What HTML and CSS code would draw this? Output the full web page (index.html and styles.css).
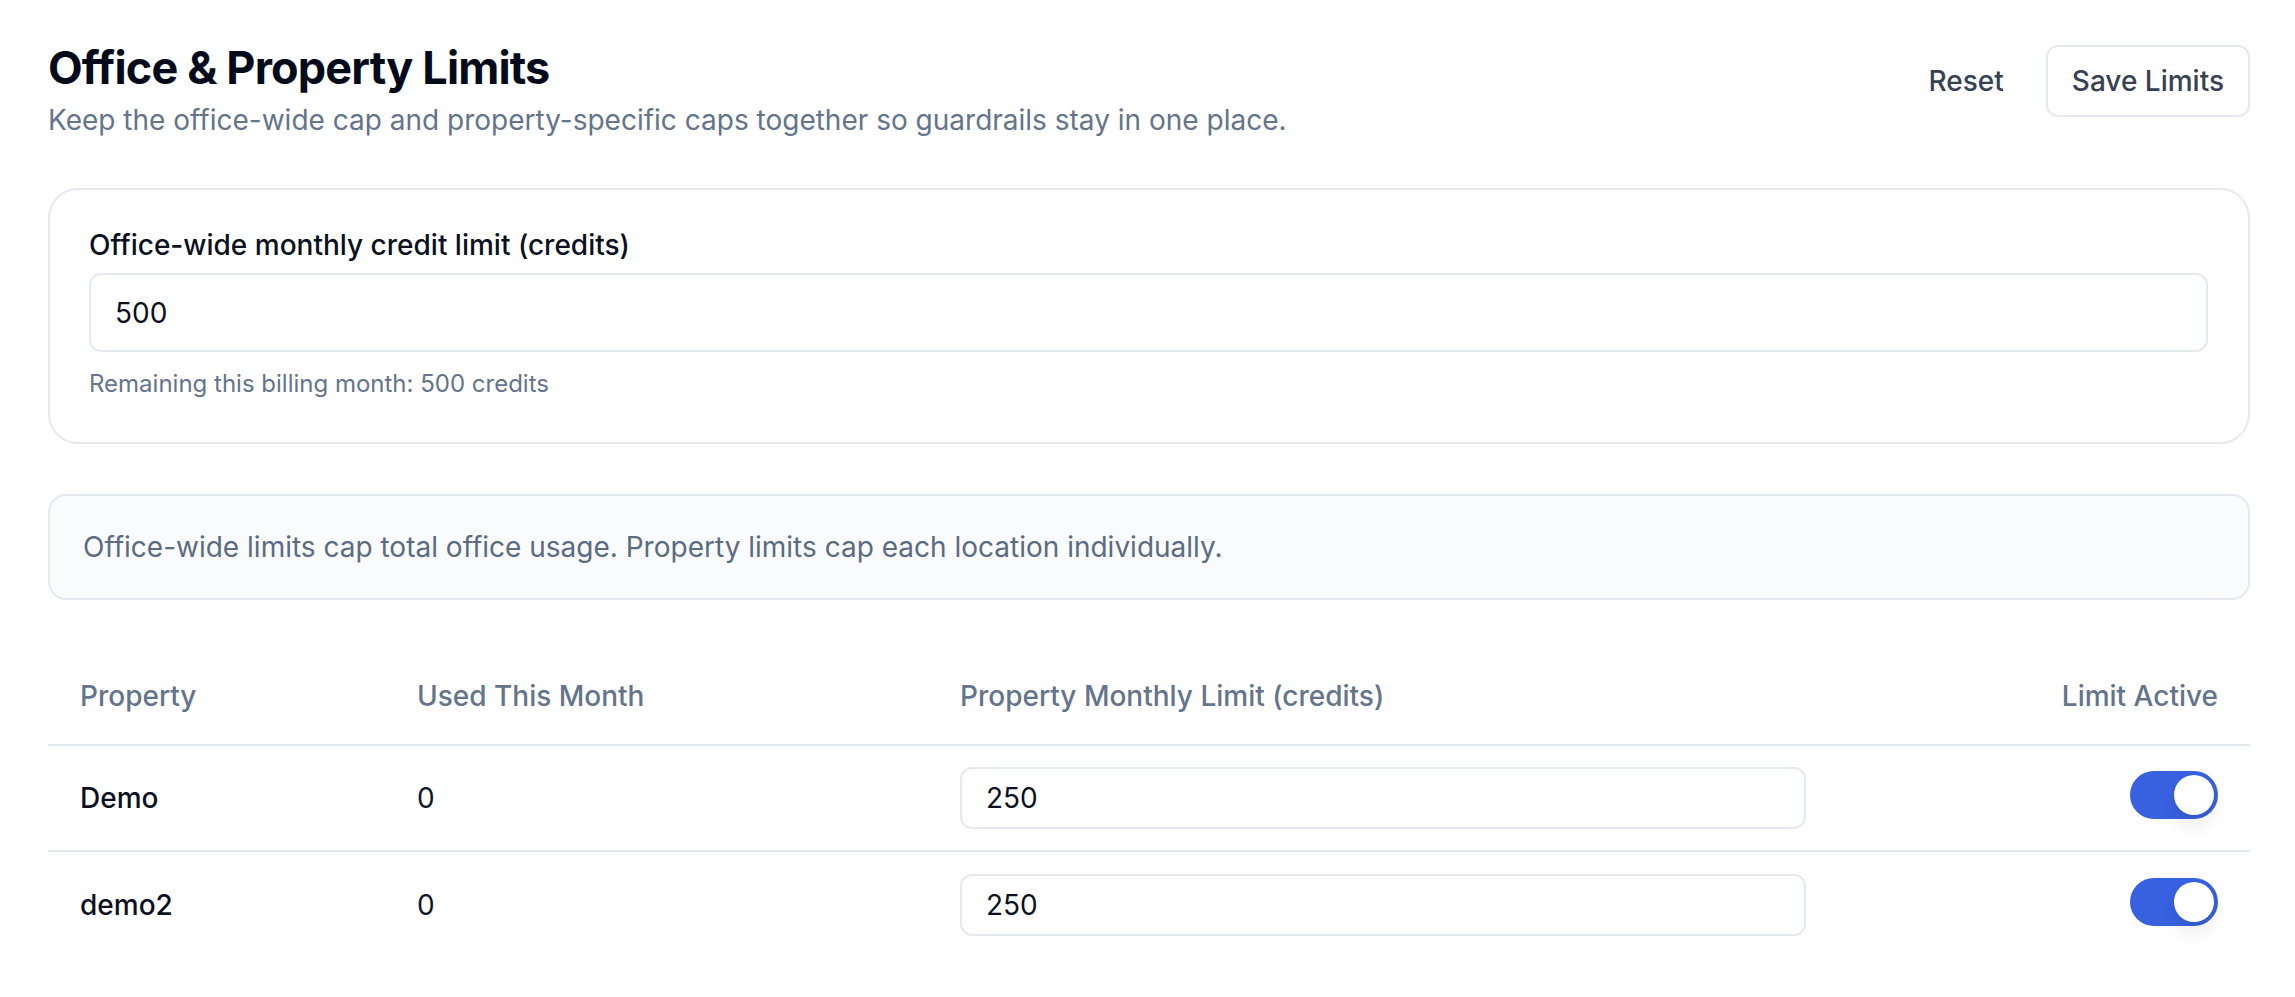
FILE: index.html
```html
<!DOCTYPE html>
<html lang="en">
<head>
<meta charset="utf-8">
<title>Office &amp; Property Limits</title>
<link rel="stylesheet" href="styles.css">
</head>
<body>
<main class="page">
  <header class="page-header">
    <div class="heading">
      <h1 class="title">Office &amp; Property Limits</h1>
      <p class="subtitle">Keep the office-wide cap and property-specific caps together so guardrails stay in one place.</p>
    </div>
    <div class="actions">
      <button class="btn btn-ghost" type="button">Reset</button>
      <button class="btn btn-outline" type="button">Save Limits</button>
    </div>
  </header>

  <section class="card">
    <label class="field-label" for="office-limit">Office-wide monthly credit limit (credits)</label>
    <input class="text-input" id="office-limit" type="text" value="500">
    <p class="helper">Remaining this billing month: 500 credits</p>
  </section>

  <div class="info">Office-wide limits cap total office usage. Property limits cap each location individually.</div>

  <div class="table">
    <div class="row head">
      <div class="cell">Property</div>
      <div class="cell">Used This Month</div>
      <div class="cell">Property Monthly Limit (credits)</div>
      <div class="cell right">Limit Active</div>
    </div>
    <div class="row">
      <div class="cell name">Demo</div>
      <div class="cell">0</div>
      <div class="cell"><input class="text-input row-input" type="text" value="250"></div>
      <div class="cell right"><span class="toggle on"><span class="knob"></span></span></div>
    </div>
    <div class="row">
      <div class="cell name">demo2</div>
      <div class="cell">0</div>
      <div class="cell"><input class="text-input row-input" type="text" value="250"></div>
      <div class="cell right"><span class="toggle on"><span class="knob"></span></span></div>
    </div>
  </div>
</main>
</body>
</html>
```

FILE: styles.css
```css
* { box-sizing: border-box; }
html, body { margin: 0; padding: 0; background: #ffffff; }
body {
  font-family: Inter, "Noto Sans", "Liberation Sans", sans-serif;
  color: #0f172a;
}
.page {
  padding: 41px 45px 40px 48px;
}
.page-header {
  display: flex;
  justify-content: space-between;
  align-items: flex-start;
  margin-bottom: 47px;
}
.title {
  margin: 0;
  font-size: 45px;
  line-height: 54px;
  font-weight: 700;
  letter-spacing: -0.85px;
  color: #050b1a;
}
.subtitle {
  margin: 4px 0 0;
  font-size: 28px;
  line-height: 42px;
  color: #64748b;
}
.actions {
  display: flex;
  gap: 16px;
  margin-top: 4px;
}
.btn {
  font-family: inherit;
  font-size: 28px;
  line-height: 34px;
  font-weight: 500;
  color: #374151;
  padding: 17px 24px;
  border-radius: 12px;
  background: #ffffff;
  border: 2px solid transparent;
  cursor: pointer;
}
.btn-outline { border-color: #e5e9f0; }
.card {
  border: 2px solid #e5e9f0;
  border-radius: 30px;
  padding: 37px 40px 42px 39px;
  display: flex;
  flex-direction: column;
}
.field-label {
  font-size: 28px;
  line-height: 36px;
  font-weight: 500;
  color: #0b1120;
}
.text-input {
  display: block;
  width: 100%;
  font-family: inherit;
  font-size: 28px;
  color: #0b1120;
  border: 2px solid #e5e9f0;
  border-radius: 12px;
  background: #fff;
  outline: none;
}
.card .text-input {
  margin-top: 10px;
  height: 79px;
  padding: 0 24px;
}
.helper {
  margin: 16px 0 0;
  font-size: 24px;
  line-height: 32px;
  color: #64748b;
}
.info {
  margin-top: 50px;
  border: 2px solid #e5e9f0;
  border-radius: 18px;
  background: #fafbfc;
  padding: 31px 33px;
  font-size: 28px;
  line-height: 40px;
  color: #5b6b82;
}
.table {
  margin-top: 48px;
}
.row {
  display: grid;
  grid-template-columns: 337px 543px 910px 1fr;
  align-items: center;
  border-bottom: 2px solid #e2e8f0;
  height: 106px;
}
.row:last-child { border-bottom: none; }
.row.head {
  height: 98px;
  color: #64748b;
  font-weight: 500;
}
.cell {
  padding: 0 32px;
  font-size: 28px;
  line-height: 36px;
}
.cell.right {
  display: flex;
  justify-content: flex-end;
}
.name { font-weight: 500; color: #0b1120; }
.row-input {
  width: 846px;
  height: 62px;
  padding: 0 24px;
}
.toggle {
  position: relative;
  display: inline-block;
  width: 88px;
  height: 48px;
  margin-bottom: 6px;
  border-radius: 24px;
  background: #3861e0;
}
.knob {
  position: absolute;
  top: 4px;
  right: 4px;
  width: 40px;
  height: 40px;
  border-radius: 50%;
  background: #ffffff;
  box-shadow: 0 12px 18px rgba(15, 23, 42, 0.08), 0 2px 4px rgba(15, 23, 42, 0.06);
}
```
